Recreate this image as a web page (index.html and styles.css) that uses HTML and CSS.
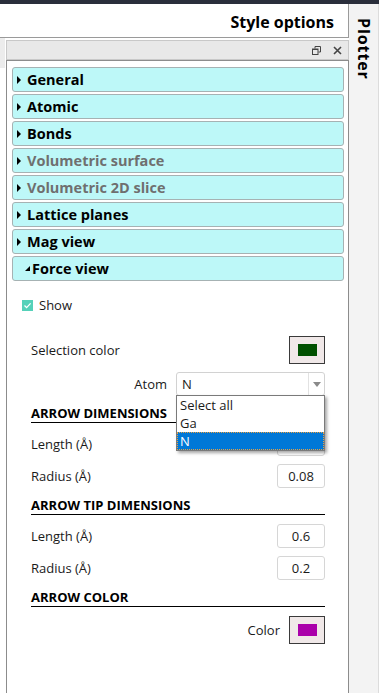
FILE: index.html
```html
<!DOCTYPE html>
<html lang="en">
<head>
    <meta charset="UTF-8">
    <meta name="viewport" content="width=device-width, initial-scale=1.0">
    <title>Style options</title>
    <link rel="stylesheet" href="styles.css">
</head>
<body>
    <div class="topbar"></div>
    <div class="main">
        <div class="left">
            <div class="paneltitle">Style options</div>
            <div class="dockwrap">
                <div class="gutter"></div>
                <div class="dock">
                    <div class="dockbar">
                        <svg class="restore" width="9" height="9" viewBox="0 0 9 9">
                            <path d="M3 2.5V0.5H8.5V6H6.5" fill="none" stroke="#444" stroke-width="1"/>
                            <rect x="0.5" y="3" width="5.5" height="5.5" fill="none" stroke="#444" stroke-width="1"/>
                            <line x1="0.5" y1="3.5" x2="6" y2="3.5" stroke="#444" stroke-width="1"/>
                        </svg>
                        <svg class="close" width="9" height="9" viewBox="0 0 9 9">
                            <path d="M1 1L8 8M8 1L1 8" stroke="#444" stroke-width="1.6"/>
                        </svg>
                    </div>
                    <div class="dockbody">
                        <div class="acc">General</div>
                        <div class="acc">Atomic</div>
                        <div class="acc">Bonds</div>
                        <div class="acc off">Volumetric surface</div>
                        <div class="acc off">Volumetric 2D slice</div>
                        <div class="acc">Lattice planes</div>
                        <div class="acc">Mag view</div>
                        <div class="acc open">Force view</div>

                        <div class="force">
                            <div class="show">
                                <span class="box">
                                    <svg width="11" height="11" viewBox="0 0 11 11">
                                        <path d="M2.5 5.5L4.6 7.6L8.6 3.4" fill="none" stroke="#fff" stroke-width="1.3"/>
                                    </svg>
                                </span>
                                Show
                            </div>

                            <div class="row tall">
                                <span>Selection color</span>
                                <button class="swatch"><span class="chip green"></span></button>
                            </div>

                            <div class="row end">
                                <span>Atom</span>
                                <div class="combo">
                                    <span class="val">N</span>
                                    <span class="arrow"></span>
                                    <div class="list">
                                        <div>Select all</div>
                                        <div>Ga</div>
                                        <div class="hi">N</div>
                                    </div>
                                </div>
                            </div>

                            <div class="head">ARROW DIMENSIONS</div>
                            <div class="row">
                                <span>Length (Å)</span>
                                <input class="num" value="0.5" readonly>
                            </div>
                            <div class="row">
                                <span>Radius (Å)</span>
                                <input class="num" value="0.08" readonly>
                            </div>

                            <div class="head">ARROW TIP DIMENSIONS</div>
                            <div class="row">
                                <span>Length (Å)</span>
                                <input class="num" value="0.6" readonly>
                            </div>
                            <div class="row">
                                <span>Radius (Å)</span>
                                <input class="num" value="0.2" readonly>
                            </div>

                            <div class="head">ARROW COLOR</div>
                            <div class="row tall end">
                                <span>Color</span>
                                <button class="swatch"><span class="chip purple"></span></button>
                            </div>
                        </div>
                    </div>
                </div>
            </div>
        </div>
        <div class="side">
            <div class="tab">Plotter</div>
        </div>
    </div>
</body>
</html>
```

FILE: styles.css
```css
* {
    box-sizing: border-box;
}
body {
    margin: 0;
    width: 379px;
    height: 693px;
    overflow: hidden;
    display: flex;
    flex-direction: column;
    font-family: "Open Sans", "Noto Sans", sans-serif;
    font-size: 13px;
    color: #1a1a1a;
    background: #fff;
}
.topbar {
    height: 4px;
    flex: none;
    background: #2a2e3b;
}
.main {
    flex: 1;
    display: flex;
    min-height: 0;
}
.left {
    width: 349px;
    display: flex;
    flex-direction: column;
}
.paneltitle {
    height: 34px;
    padding: 7px 14px 0 0;
    text-align: right;
    font-size: 16px;
    font-weight: 700;
    line-height: 22px;
    color: #000;
    border-bottom: 1px solid #9a9a9a;
    border-right: 1px solid #9a9a9a;
}
.dockwrap {
    flex: 1;
    display: flex;
    min-height: 0;
}
.gutter {
    width: 5px;
    background: linear-gradient(#ececec 30px, #fff 30px);
}
.dock {
    flex: 1;
    margin-left: 1px;
    padding-top: 2px;
    display: flex;
    flex-direction: column;
}
.dockbar {
    height: 20px;
    display: flex;
    align-items: center;
    justify-content: flex-end;
    gap: 12px;
    padding-right: 6px;
    background: #e8e8e8;
    border: 1px solid #c8c8c8;
}
.dockbody {
    flex: 1;
    padding: 6px 4px 0 5px;
    border: 1px solid #8c8c8c;
    border-bottom: none;
}

/* accordion headers */
.acc {
    height: 25px;
    margin-bottom: 2px;
    display: flex;
    align-items: center;
    font-size: 14.5px;
    font-weight: 700;
    color: #000;
    background: #bdf8f8;
    border: 1px solid #a6b2b3;
    border-radius: 3px;
}
.acc::before {
    content: "";
    width: 0;
    height: 0;
    margin: 0 6px 0 4px;
    border-left: 4px solid #000;
    border-top: 4px solid transparent;
    border-bottom: 4px solid transparent;
}
.acc.off {
    color: #6f6f6f;
}
.acc.open::before {
    margin: 0 2px 0 12px;
    border-top: none;
    border-left: 5px solid transparent;
    border-bottom: 5px solid #000;
}

/* force view content */
.force {
    padding: 0 19px;
}
.show {
    height: 20px;
    margin: 14px 0 0 -9px;
    display: flex;
    align-items: center;
    gap: 6px;
}
.box {
    width: 11px;
    height: 11px;
    display: flex;
    background: #55d1b9;
}
.row {
    height: 24px;
    margin-top: 8px;
    display: flex;
    align-items: center;
    justify-content: space-between;
    line-height: 18px;
}
.row.tall {
    height: 28px;
}
.show + .row {
    margin-top: 21px;
}
.row.end {
    justify-content: flex-end;
    gap: 9px;
}
.head {
    margin-top: 8px;
    font-weight: 700;
    line-height: 18px;
    color: #000;
    border-bottom: 1px solid #000;
}
.head + .row {
    margin-top: 9px;
}
.swatch {
    width: 36px;
    height: 28px;
    padding: 0;
    display: flex;
    align-items: center;
    justify-content: center;
    background: #f0e8e8;
    border: 1px solid #3a3a3a;
    border-radius: 0;
}
.chip {
    width: 19px;
    height: 12px;
}
.chip.green {
    background: #005000;
}
.chip.purple {
    background: #aa00aa;
}
.num {
    width: 48px;
    height: 24px;
    padding: 0;
    font-family: inherit;
    font-size: 13px;
    color: #1a1a1a;
    text-align: center;
    border: 1px solid #d6d6d6;
    border-radius: 3px;
    background: #fff;
}

/* combo + open list */
.combo {
    position: relative;
    width: 149px;
    height: 24px;
    display: flex;
    align-items: center;
    padding-left: 5px;
    border: 1px solid #d2d2d2;
    border-radius: 3px;
}
.val {
    flex: 1;
}
.arrow {
    width: 16px;
    height: 100%;
    display: flex;
    align-items: center;
    justify-content: center;
    border-left: 1px solid #e2e2e2;
}
.arrow::after {
    content: "";
    border-top: 5px solid #8a8a8a;
    border-left: 4.5px solid transparent;
    border-right: 4.5px solid transparent;
}
.list {
    position: absolute;
    left: -1px;
    top: 22px;
    width: 149px;
    z-index: 2;
    background: #fff;
    border: 1px solid #7a7a7a;
    box-shadow: 2px 2px 3px rgba(0, 0, 0, 0.35);
}
.list div {
    height: 18px;
    line-height: 18px;
    padding-left: 3px;
}
.list .hi {
    color: #fff;
    background: #0078d7;
    outline: 1px dotted #e8a040;
    outline-offset: -1px;
}

/* right tab strip */
.side {
    flex: 1;
    background: #f3f3f3;
    border-right: 1px solid #dcdcdc;
}
.tab {
    writing-mode: vertical-rl;
    padding-top: 14px;
    font-size: 16px;
    font-weight: 700;
    letter-spacing: 0.9px;
    line-height: 29px;
    color: #000;
}
```
